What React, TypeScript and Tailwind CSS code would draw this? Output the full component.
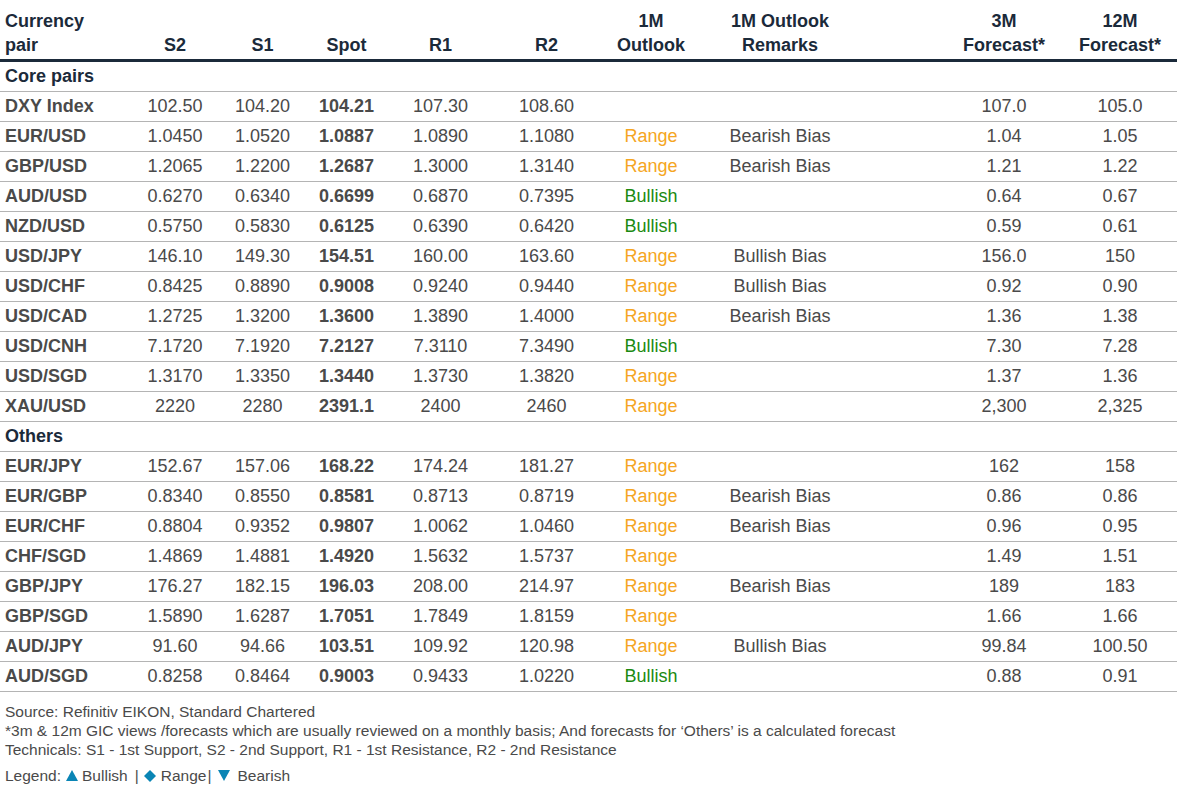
type Row = {
  pair: string
  s2: string
  s1: string
  spot: string
  r1: string
  r2: string
  outlook?: 'Range' | 'Bullish'
  remark?: string
  m3: string
  m12: string
}

const core: Row[] = [
  { pair: 'DXY Index', s2: '102.50', s1: '104.20', spot: '104.21', r1: '107.30', r2: '108.60', m3: '107.0', m12: '105.0' },
  { pair: 'EUR/USD', s2: '1.0450', s1: '1.0520', spot: '1.0887', r1: '1.0890', r2: '1.1080', outlook: 'Range', remark: 'Bearish Bias', m3: '1.04', m12: '1.05' },
  { pair: 'GBP/USD', s2: '1.2065', s1: '1.2200', spot: '1.2687', r1: '1.3000', r2: '1.3140', outlook: 'Range', remark: 'Bearish Bias', m3: '1.21', m12: '1.22' },
  { pair: 'AUD/USD', s2: '0.6270', s1: '0.6340', spot: '0.6699', r1: '0.6870', r2: '0.7395', outlook: 'Bullish', m3: '0.64', m12: '0.67' },
  { pair: 'NZD/USD', s2: '0.5750', s1: '0.5830', spot: '0.6125', r1: '0.6390', r2: '0.6420', outlook: 'Bullish', m3: '0.59', m12: '0.61' },
  { pair: 'USD/JPY', s2: '146.10', s1: '149.30', spot: '154.51', r1: '160.00', r2: '163.60', outlook: 'Range', remark: 'Bullish Bias', m3: '156.0', m12: '150' },
  { pair: 'USD/CHF', s2: '0.8425', s1: '0.8890', spot: '0.9008', r1: '0.9240', r2: '0.9440', outlook: 'Range', remark: 'Bullish Bias', m3: '0.92', m12: '0.90' },
  { pair: 'USD/CAD', s2: '1.2725', s1: '1.3200', spot: '1.3600', r1: '1.3890', r2: '1.4000', outlook: 'Range', remark: 'Bearish Bias', m3: '1.36', m12: '1.38' },
  { pair: 'USD/CNH', s2: '7.1720', s1: '7.1920', spot: '7.2127', r1: '7.3110', r2: '7.3490', outlook: 'Bullish', m3: '7.30', m12: '7.28' },
  { pair: 'USD/SGD', s2: '1.3170', s1: '1.3350', spot: '1.3440', r1: '1.3730', r2: '1.3820', outlook: 'Range', m3: '1.37', m12: '1.36' },
  { pair: 'XAU/USD', s2: '2220', s1: '2280', spot: '2391.1', r1: '2400', r2: '2460', outlook: 'Range', m3: '2,300', m12: '2,325' },
]

const others: Row[] = [
  { pair: 'EUR/JPY', s2: '152.67', s1: '157.06', spot: '168.22', r1: '174.24', r2: '181.27', outlook: 'Range', m3: '162', m12: '158' },
  { pair: 'EUR/GBP', s2: '0.8340', s1: '0.8550', spot: '0.8581', r1: '0.8713', r2: '0.8719', outlook: 'Range', remark: 'Bearish Bias', m3: '0.86', m12: '0.86' },
  { pair: 'EUR/CHF', s2: '0.8804', s1: '0.9352', spot: '0.9807', r1: '1.0062', r2: '1.0460', outlook: 'Range', remark: 'Bearish Bias', m3: '0.96', m12: '0.95' },
  { pair: 'CHF/SGD', s2: '1.4869', s1: '1.4881', spot: '1.4920', r1: '1.5632', r2: '1.5737', outlook: 'Range', m3: '1.49', m12: '1.51' },
  { pair: 'GBP/JPY', s2: '176.27', s1: '182.15', spot: '196.03', r1: '208.00', r2: '214.97', outlook: 'Range', remark: 'Bearish Bias', m3: '189', m12: '183' },
  { pair: 'GBP/SGD', s2: '1.5890', s1: '1.6287', spot: '1.7051', r1: '1.7849', r2: '1.8159', outlook: 'Range', m3: '1.66', m12: '1.66' },
  { pair: 'AUD/JPY', s2: '91.60', s1: '94.66', spot: '103.51', r1: '109.92', r2: '120.98', outlook: 'Range', remark: 'Bullish Bias', m3: '99.84', m12: '100.50' },
  { pair: 'AUD/SGD', s2: '0.8258', s1: '0.8464', spot: '0.9003', r1: '0.9433', r2: '1.0220', outlook: 'Bullish', m3: '0.88', m12: '0.91' },
]

const grid =
  'grid grid-cols-[130px_90px_85px_83px_105px_107px_102px_156px_87px_118px_114px]'

function DataRow({ row }: { row: Row }) {
  return (
    <div className={`${grid} h-[30px] items-center border-b border-[#b4b4b4] text-center text-[#4a4a4a]`}>
      <div className="pl-[5px] text-left font-bold">{row.pair}</div>
      <div>{row.s2}</div>
      <div>{row.s1}</div>
      <div className="font-bold">{row.spot}</div>
      <div>{row.r1}</div>
      <div>{row.r2}</div>
      <div className={row.outlook === 'Bullish' ? 'text-[#1b8a10]' : 'text-[#f5a623]'}>{row.outlook}</div>
      <div>{row.remark}</div>
      <div />
      <div>{row.m3}</div>
      <div>{row.m12}</div>
    </div>
  )
}

function Section({ title }: { title: string }) {
  return (
    <div className="h-[30px] flex items-center border-b border-[#b4b4b4] pl-[5px] font-bold text-[#1b2a3a]">
      {title}
    </div>
  )
}

function Marker({ shape }: { shape: 'up' | 'diamond' | 'down' }) {
  const points =
    shape === 'up' ? '6,0 12,11 0,11' : shape === 'down' ? '0,0 12,0 6,11' : '6,0 12,6 6,12 0,6'
  return (
    <svg viewBox="0 0 12 12" className="inline-block w-[12px] h-[12px] align-[-1px] fill-[#0a85b5]">
      <polygon points={points} />
    </svg>
  )
}

export default function App() {
  return (
    <div className="w-[1177px] h-[790px] bg-white font-['Liberation_Sans',Arial,sans-serif]">
      <div className="text-[18px]">
        <div className={`${grid} h-[62px] items-end pb-[2px] border-b-[3px] border-[#1b2a3a] text-center font-bold leading-[24px] text-[#1b2a3a]`}>
          <div className="pl-[5px] text-left">Currency<br />pair</div>
          <div>S2</div>
          <div>S1</div>
          <div>Spot</div>
          <div>R1</div>
          <div>R2</div>
          <div>1M<br />Outlook</div>
          <div>1M Outlook<br />Remarks</div>
          <div />
          <div>3M<br />Forecast*</div>
          <div>12M<br />Forecast*</div>
        </div>
        <Section title="Core pairs" />
        {core.map((r) => (
          <DataRow key={r.pair} row={r} />
        ))}
        <Section title="Others" />
        {others.map((r) => (
          <DataRow key={r.pair} row={r} />
        ))}
      </div>

      <div className="pl-[5px] pt-[10px] text-[15.5px] leading-[19px] text-[#4a4a4a]">
        <p>Source: Refinitiv EIKON, Standard Chartered</p>
        <p>*3m &amp; 12m GIC views /forecasts which are usually reviewed on a monthly basis; And forecasts for ‘Others’ is a calculated forecast</p>
        <p>Technicals: S1 - 1st Support, S2 - 2nd Support, R1 - 1st Resistance, R2 - 2nd Resistance</p>
        <p className="mt-[7px]">
          Legend:<span className="ml-[5px] mr-[4px]"><Marker shape="up" /></span>Bullish
          <span className="ml-[7px] mr-[5px]">|</span><Marker shape="diamond" />
          <span className="ml-[5px]">Range</span>
          <span className="ml-[1px] mr-[7px]">|</span><Marker shape="down" />
          <span className="ml-[7px]">Bearish</span>
        </p>
      </div>
    </div>
  )
}
